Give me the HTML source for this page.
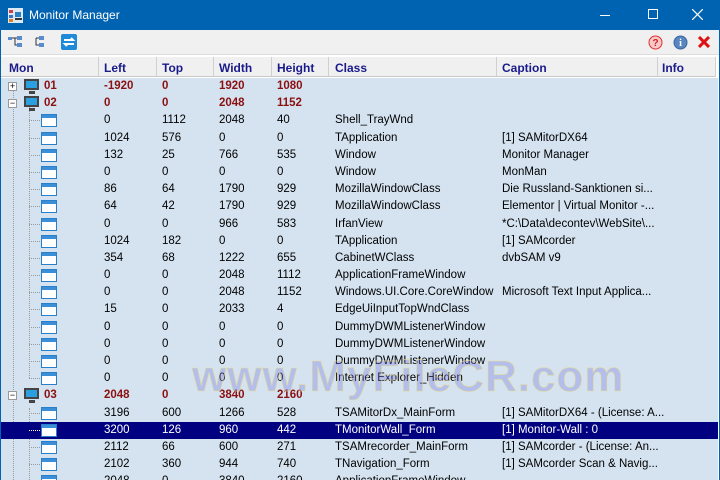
<!DOCTYPE html>
<html><head><meta charset="utf-8"><style>
*{margin:0;padding:0;box-sizing:border-box}
body{width:720px;height:480px;overflow:hidden;background:#fff;font-family:"Liberation Sans",sans-serif;font-size:11.5px;position:relative}
.title{position:absolute;left:0;top:0;width:720px;height:30px;background:#0063b1;color:#fff}
.title .t{position:absolute;left:29px;top:8px;font-size:12px}
.tb{position:absolute;left:1px;top:30px;width:718px;height:25px;background:#f0f0f0;border-bottom:1px solid #ddd}
.hdr{position:absolute;left:1px;top:57px;width:715px;height:20px;background:#f0f0f0;border-bottom:1px solid #c8c8c8}
.hdr span{position:absolute;top:4px;font-weight:bold;color:#1a1a8c;font-size:12px}
.hdr i{position:absolute;top:0;width:1px;height:20px;background:#d0d0d0}
.list{position:absolute;left:1px;top:78px;width:717px;height:402px;background:#d5e3f1;overflow:hidden}
.r{position:relative;height:17.2px;line-height:17px;white-space:nowrap}
.r span{position:absolute;top:0}
.m span{color:#8b1010;font-weight:bold}
.sel{background:#000080;color:#fff}
.c1{left:103px}.c2{left:161px}.c3{left:218px}.c4{left:276px}.c5{left:334px}.c6{left:501px}
.ico{position:absolute;left:40px;top:2px;width:16px;height:13px;border:1px solid #2a7fc8;background:#fff}
.ico:before{content:"";position:absolute;left:0;top:0;width:14px;height:3px;background:#3b8fd8}
.mon{position:absolute;left:23px;top:1px;width:15px;height:11px;border:2px solid #444;background:#2aa0e0}
.mon:after{content:"";position:absolute;left:3px;top:10px;width:6px;height:3px;background:#444}
.exp{position:absolute;left:7px;top:4px;width:9px;height:9px;border:1px solid #999;background:#fff;font-size:9px;line-height:7px;text-align:center;color:#000}
.vl{position:absolute;border-left:1px dotted #999}
.hl{position:absolute;left:28px;top:8px;width:11px;border-top:1px dotted #999}
.wm{position:absolute;left:192px;top:352px;font-size:44px;font-weight:bold;color:rgba(120,120,220,0.35);-webkit-text-stroke:1px rgba(230,220,150,0.6);letter-spacing:1px;font-family:"Liberation Sans",sans-serif}
</style></head><body>
<div class="title">
<svg style="position:absolute;left:8px;top:8px" width="15" height="15"><rect width="15" height="15" fill="#dde8f5"/><rect x="1" y="2" width="4" height="3" fill="#d04040"/><rect x="1" y="7" width="4" height="3" fill="#4070c0"/><rect x="1" y="11" width="4" height="3" fill="#e08020"/><rect x="7" y="4" width="6" height="5" fill="#2a80c0"/><rect x="7" y="10" width="7" height="2" fill="#333"/></svg>
<span class="t">Monitor Manager</span>
<div style="position:absolute;left:600px;top:15px;width:10px;height:1px;background:#fff"></div>
<div style="position:absolute;left:648px;top:9px;width:10px;height:10px;border:1px solid #fff"></div>
<svg style="position:absolute;left:692px;top:9px" width="11" height="11"><path d="M0 0L11 11M11 0L0 11" stroke="#fff" stroke-width="1.2"/></svg>
</div>
<div class="tb">
<svg style="position:absolute;left:7px;top:6px" width="15" height="12"><rect x="0" y="1" width="4" height="3" fill="#5a8ad0"/><rect x="9" y="0" width="5" height="4" fill="#5a8ad0"/><rect x="9" y="7" width="5" height="4" fill="#5a8ad0"/><path d="M4 2H7V9H9M7 2H9" stroke="#333" fill="none"/></svg>
<svg style="position:absolute;left:34px;top:6px" width="10" height="12"><rect x="4" y="0" width="5" height="4" fill="#5a8ad0"/><rect x="4" y="7" width="5" height="4" fill="#5a8ad0"/><path d="M1 2V9H4M1 2H4" stroke="#333" fill="none"/></svg>
<svg style="position:absolute;left:60px;top:4px" width="16" height="16"><rect width="16" height="16" rx="2" fill="#1f8ad8"/><path d="M3 6H12L10 4M13 10H4L6 12" stroke="#fff" stroke-width="2" fill="none"/></svg>
<svg style="position:absolute;left:647px;top:5px" width="15" height="15"><circle cx="7.5" cy="7.5" r="6.5" fill="#f7c8c8" stroke="#e03030"/><text x="7.5" y="11" font-size="10" font-weight="bold" text-anchor="middle" fill="#d02020" font-family="Liberation Sans">?</text></svg>
<svg style="position:absolute;left:672px;top:5px" width="15" height="15"><circle cx="7.5" cy="7.5" r="6.5" fill="#5a86c0" stroke="#3a66a0"/><text x="7.5" y="11" font-size="10" font-weight="bold" text-anchor="middle" fill="#fff" font-family="Liberation Serif">i</text></svg>
<svg style="position:absolute;left:697px;top:6px" width="12" height="12"><path d="M1 1L11 11M11 1L1 11" stroke="#e01010" stroke-width="3"/></svg>
</div>
<div class="hdr">
<span style="left:8px">Mon</span><i style="left:97px"></i>
<span style="left:103px">Left</span><i style="left:155px"></i>
<span style="left:161px">Top</span><i style="left:212px"></i>
<span style="left:218px">Width</span><i style="left:270px"></i>
<span style="left:276px">Height</span><i style="left:327px"></i>
<span style="left:334px">Class</span><i style="left:495px"></i>
<span style="left:501px">Caption</span><i style="left:656px"></i>
<span style="left:661px">Info</span><i style="left:714px"></i>
</div>
<div class="list">
<div class="vl" style="left:12px;top:10px;height:400px"></div>
<div class="vl" style="left:28px;top:25px;height:275px"></div>
<div class="vl" style="left:28px;top:330px;height:80px"></div>
<div class="r m"><div class="exp">+</div><div class="mon"></div><span style="left:43px">01</span><span class="c1">-1920</span><span class="c2">0</span><span class="c3">1920</span><span class="c4">1080</span></div>
<div class="r m"><div class="exp">−</div><div class="mon"></div><span style="left:43px">02</span><span class="c1">0</span><span class="c2">0</span><span class="c3">2048</span><span class="c4">1152</span></div>
<div class="r"><div class="hl"></div><div class="ico"></div><span class="c1">0</span><span class="c2">1112</span><span class="c3">2048</span><span class="c4">40</span><span class="c5">Shell_TrayWnd</span></div>
<div class="r"><div class="hl"></div><div class="ico"></div><span class="c1">1024</span><span class="c2">576</span><span class="c3">0</span><span class="c4">0</span><span class="c5">TApplication</span><span class="c6">[1] SAMitorDX64</span></div>
<div class="r"><div class="hl"></div><div class="ico"></div><span class="c1">132</span><span class="c2">25</span><span class="c3">766</span><span class="c4">535</span><span class="c5">Window</span><span class="c6">Monitor Manager</span></div>
<div class="r"><div class="hl"></div><div class="ico"></div><span class="c1">0</span><span class="c2">0</span><span class="c3">0</span><span class="c4">0</span><span class="c5">Window</span><span class="c6">MonMan</span></div>
<div class="r"><div class="hl"></div><div class="ico"></div><span class="c1">86</span><span class="c2">64</span><span class="c3">1790</span><span class="c4">929</span><span class="c5">MozillaWindowClass</span><span class="c6">Die Russland-Sanktionen si...</span></div>
<div class="r"><div class="hl"></div><div class="ico"></div><span class="c1">64</span><span class="c2">42</span><span class="c3">1790</span><span class="c4">929</span><span class="c5">MozillaWindowClass</span><span class="c6">Elementor | Virtual Monitor -...</span></div>
<div class="r"><div class="hl"></div><div class="ico"></div><span class="c1">0</span><span class="c2">0</span><span class="c3">966</span><span class="c4">583</span><span class="c5">IrfanView</span><span class="c6">*C:\Data\decontev\WebSite\...</span></div>
<div class="r"><div class="hl"></div><div class="ico"></div><span class="c1">1024</span><span class="c2">182</span><span class="c3">0</span><span class="c4">0</span><span class="c5">TApplication</span><span class="c6">[1] SAMcorder</span></div>
<div class="r"><div class="hl"></div><div class="ico"></div><span class="c1">354</span><span class="c2">68</span><span class="c3">1222</span><span class="c4">655</span><span class="c5">CabinetWClass</span><span class="c6">dvbSAM v9</span></div>
<div class="r"><div class="hl"></div><div class="ico"></div><span class="c1">0</span><span class="c2">0</span><span class="c3">2048</span><span class="c4">1112</span><span class="c5">ApplicationFrameWindow</span></div>
<div class="r"><div class="hl"></div><div class="ico"></div><span class="c1">0</span><span class="c2">0</span><span class="c3">2048</span><span class="c4">1152</span><span class="c5">Windows.UI.Core.CoreWindow</span><span class="c6">Microsoft Text Input Applica...</span></div>
<div class="r"><div class="hl"></div><div class="ico"></div><span class="c1">15</span><span class="c2">0</span><span class="c3">2033</span><span class="c4">4</span><span class="c5">EdgeUiInputTopWndClass</span></div>
<div class="r"><div class="hl"></div><div class="ico"></div><span class="c1">0</span><span class="c2">0</span><span class="c3">0</span><span class="c4">0</span><span class="c5">DummyDWMListenerWindow</span></div>
<div class="r"><div class="hl"></div><div class="ico"></div><span class="c1">0</span><span class="c2">0</span><span class="c3">0</span><span class="c4">0</span><span class="c5">DummyDWMListenerWindow</span></div>
<div class="r"><div class="hl"></div><div class="ico"></div><span class="c1">0</span><span class="c2">0</span><span class="c3">0</span><span class="c4">0</span><span class="c5">DummyDWMListenerWindow</span></div>
<div class="r"><div class="hl"></div><div class="ico"></div><span class="c1">0</span><span class="c2">0</span><span class="c3">0</span><span class="c4">0</span><span class="c5">Internet Explorer_Hidden</span></div>
<div class="r m"><div class="exp">−</div><div class="mon"></div><span style="left:43px">03</span><span class="c1">2048</span><span class="c2">0</span><span class="c3">3840</span><span class="c4">2160</span></div>
<div class="r"><div class="hl"></div><div class="ico"></div><span class="c1">3196</span><span class="c2">600</span><span class="c3">1266</span><span class="c4">528</span><span class="c5">TSAMitorDx_MainForm</span><span class="c6">[1] SAMitorDX64 - (License: A...</span></div>
<div class="r sel"><div class="hl" style="border-color:#fff"></div><div class="ico"></div><span class="c1">3200</span><span class="c2">126</span><span class="c3">960</span><span class="c4">442</span><span class="c5">TMonitorWall_Form</span><span class="c6">[1] Monitor-Wall : 0</span></div>
<div class="r"><div class="hl"></div><div class="ico"></div><span class="c1">2112</span><span class="c2">66</span><span class="c3">600</span><span class="c4">271</span><span class="c5">TSAMrecorder_MainForm</span><span class="c6">[1] SAMcorder - (License: An...</span></div>
<div class="r"><div class="hl"></div><div class="ico"></div><span class="c1">2102</span><span class="c2">360</span><span class="c3">944</span><span class="c4">740</span><span class="c5">TNavigation_Form</span><span class="c6">[1] SAMcorder Scan &amp; Navig...</span></div>
<div class="r"><div class="hl"></div><div class="ico"></div><span class="c1">2048</span><span class="c2">0</span><span class="c3">3840</span><span class="c4">2160</span><span class="c5">ApplicationFrameWindow</span></div>
</div>
<div class="wm">www.MyFileCR.com</div>
<div style="position:absolute;left:0;top:30px;width:1px;height:450px;background:#0063b1"></div>
<div style="position:absolute;right:0;top:30px;width:1px;height:450px;background:#0063b1"></div>
</body></html>
